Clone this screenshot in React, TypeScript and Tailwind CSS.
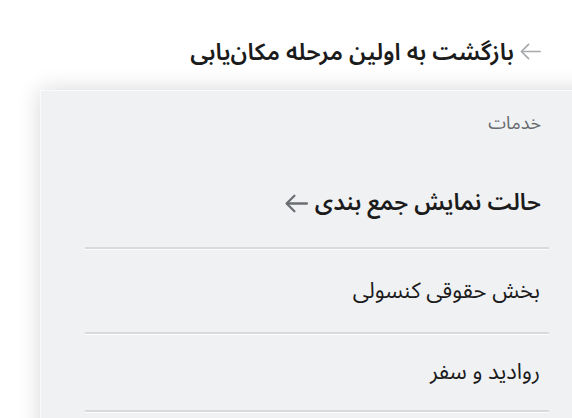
import React from "react";

function ArrowLeft({ className, strokeWidth = 2 }: { className?: string; strokeWidth?: number }) {
  return (
    <svg
      viewBox="0 0 24 24"
      fill="none"
      stroke="currentColor"
      strokeWidth={strokeWidth}
      strokeLinecap="round"
      strokeLinejoin="round"
      className={className}
    >
      <path d="M22 12H3" />
      <path d="M10 4.5L2.5 12l7.5 7.5" />
    </svg>
  );
}

function Divider() {
  return <div className="h-[2px] bg-[#d9dadd] shadow-[0_1px_0_rgba(255,255,255,0.8)]" />;
}

const items = [
  { label: "بخش حقوقی کنسولی", h: "h-[83px]" },
  { label: "روادید و سفر", h: "h-[76px]" },
];

export default function App() {
  return (
    <div
      dir="rtl"
      className="h-[418px] w-[572px] overflow-hidden bg-white font-['Noto_Sans_Arabic','DejaVu_Sans',sans-serif]"
    >
      {/* back link */}
      <div className="flex h-[90px] items-start gap-[5px] pr-[30px] pt-[36px]">
        <ArrowLeft className="mt-[4px] h-[23px] w-[23px] text-[#a7a9ad]" strokeWidth={1.8} />
        <span className="text-[23.5px] font-semibold leading-[34px] text-[#1b1b1b]">
          بازگشت به اولین مرحله مکان‌یابی
        </span>
      </div>

      {/* panel */}
      <div className="ml-[40px] -mr-[40px] h-[400px] border border-white/70 bg-[#f0f1f3] shadow-[0_0_22px_rgba(0,0,0,0.16)]">
        <div className="pr-[70px] pt-[18px] text-[18px] leading-[28px] text-[#676a6f]">
          خدمات
        </div>

        <div className="mr-[62px] ml-[44px] mt-[49px]">
          <div className="flex h-[61px] items-start gap-[6px] pr-[8px]">
            <span className="text-[23px] font-semibold leading-[34px] text-[#1b1b1b]">
              حالت نمایش جمع بندی
            </span>
            <ArrowLeft className="mt-[5px] h-[25px] w-[25px] text-[#6b6e73]" strokeWidth={2.2} />
          </div>

          {items.map((item) => (
            <div key={item.label}>
              <Divider />
              <div
                className={`flex items-center pr-[9px] text-[22px] leading-[32px] text-[#1b1b1b] ${item.h}`}
              >
                {item.label}
              </div>
            </div>
          ))}
          <Divider />
        </div>
      </div>
    </div>
  );
}
